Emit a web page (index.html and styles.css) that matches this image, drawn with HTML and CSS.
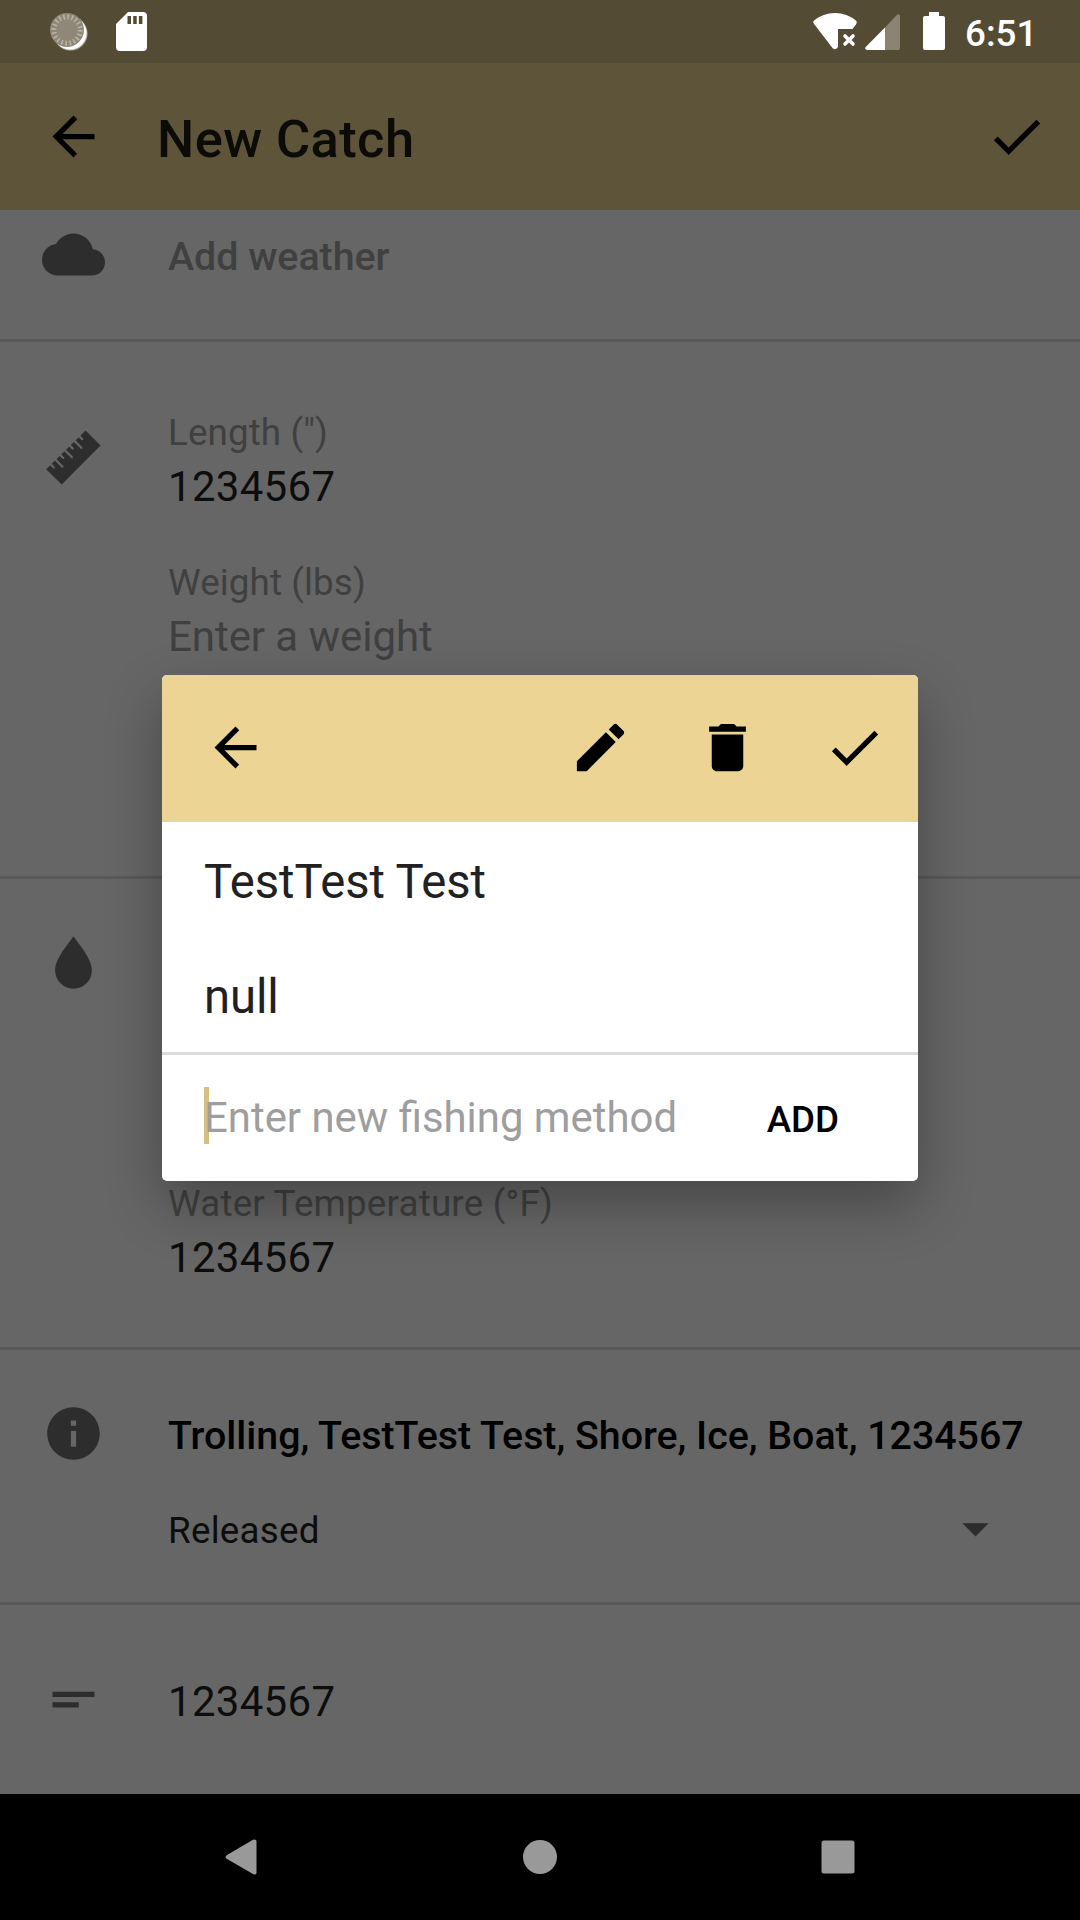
FILE: index.html
```html
<!DOCTYPE html>
<html lang="en">
<head>
<meta charset="utf-8">
<title>New Catch</title>
<link rel="stylesheet" href="styles.css">
</head>
<body>
<div class="screen">
  <header class="status-bar">
    <div class="status-left">
      <svg class="sync" viewBox="0 0 40 40"><circle cx="21.500" cy="21.500" r="17" fill="#b9b4a8"/><circle cx="21" cy="21" r="16.500" fill="#fff"/><circle cx="18" cy="18" r="17" fill="#8f8878"/><circle cx="18" cy="18" r="13.200" fill="none" stroke="#bab5a8" stroke-width="5" stroke-dasharray="1.500 2.647"/></svg>
      <svg class="sd" viewBox="0 0 31 39"><path fill="#fff" fill-rule="evenodd" d="M12 0H27Q31 0 31 4V35Q31 39 27 39H4Q0 39 0 35V12ZM11.500 4V12H15V4ZM17.200 4V12H20.700V4ZM22.900 4V12H26.400V4Z"/></svg>
    </div>
    <div class="status-right">
      <svg class="wifi" viewBox="0 0 44 37"><path fill="#fff" d="M0.500 8Q10 0 22 0T43.500 8Q44 10 43 11.500L39.500 16H25V34Q22 38 19.500 35L.7 10.500Q0 9 .5 8Z"/><path d="M32 23l8 8M40 23l-8 8" stroke="#fff" stroke-width="3.600" stroke-linecap="round"/></svg>
      <svg class="signal" viewBox="0 0 35 36"><path fill="#8b8473" d="M20 13.500L32 .8Q35-.5 35 2V34Q35 36 33 36H20Z"/><path fill="#fff" d="M20 13.500V36H2Q-1 35 .7 33Z"/></svg>
      <svg class="battery" viewBox="0 0 22 38"><path fill="#fff" d="M6 0H16V4H20Q22 4 22 6V36Q22 38 20 38H2Q0 38 0 36V6Q0 4 2 4H6Z"/></svg>
      <span class="clock">6:51</span>
    </div>
  </header>
  <nav class="app-bar">
    <svg class="icon" viewBox="0 0 24 24"><path d="M20 11H7.830l5.590-5.590L12 4l-8 8 8 8 1.410-1.410L7.830 13H20z"/></svg>
    <h1 class="title">New Catch</h1>
    <svg class="icon" viewBox="0 0 24 24"><path d="M9 16.170L4.830 12l-1.420 1.410L9 19 21 7l-1.410-1.410z"/></svg>
  </nav>
  <main class="form">
    <section class="section weather">
      <svg class="icon" viewBox="0 0 24 24"><path d="M19.350 10.040C18.670 6.590 15.640 4 12 4 9.110 4 6.600 5.640 5.350 8.040 2.340 8.360 0 10.910 0 14c0 3.310 2.690 6 6 6h13c2.760 0 5-2.240 5-5 0-2.640-2.050-4.780-4.650-4.960z"/></svg>
      <div class="strong hint">Add weather</div>
    </section>
    <section class="section size">
      <svg class="icon ruler" viewBox="0 0 24 24">
        <path d="M16.600 1.700L22.300 7.400 7.500 22.300 1.600 16.500Z"/>
        <path class="ticks" d="M3 14.300l1.500 1.500M4.800 12.500l3 3M6.600 10.700l1.500 1.500M8.400 8.900l3 3M10.200 7.100l1.500 1.500M12 5.300l3 3M13.800 3.500l1.500 1.500"/>
      </svg>
      <div class="fields">
        <div class="field"><div class="label">Length (")</div><div class="value number">1234567</div></div>
        <div class="field"><div class="label">Weight (lbs)</div><div class="value hint">Enter a weight</div></div>
      </div>
    </section>
    <section class="section water">
      <svg class="icon" viewBox="0 0 24 24"><path d="M12 2C10 5 5 10.500 5 15a7 7 0 0 0 14 0c0-4.500-5-10-7-13z"/></svg>
      <div class="field"><div class="label wide">Water Temperature (°F)</div><div class="value number">1234567</div></div>
    </section>
    <section class="section details">
      <svg class="icon" viewBox="0 0 24 24"><path d="M12 2C6.480 2 2 6.480 2 12s4.480 10 10 10 10-4.480 10-10S17.520 2 12 2zm1 15h-2v-6h2v6zm0-8h-2V7h2v2z"/></svg>
      <div class="detail-rows">
        <div class="strong">Trolling, TestTest Test, Shore, Ice, Boat, 1234567</div>
        <div class="select"><span class="choice">Released</span><svg class="icon" viewBox="0 0 24 24"><path d="M7 10l5 5 5-5z"/></svg></div>
      </div>
    </section>
    <section class="section notes">
      <svg class="icon" viewBox="0 0 24 24"><path d="M4 9h16v2H4zm0 4h10v2H4z"/></svg>
      <div class="value number">1234567</div>
    </section>
  </main>
  <footer class="nav-bar">
    <svg viewBox="0 0 32 36"><path d="M2 16L28 .8Q31-.3 31.500 2V34Q31 36.500 28 35L2 20Q-1 18 2 16Z"/></svg>
    <svg viewBox="0 0 36 36"><circle cx="18" cy="18" r="18"/></svg>
    <svg viewBox="0 0 34 34"><rect x=".5" y=".5" width="33" height="33" rx="2.500"/></svg>
  </footer>

  <div class="dialog">
    <div class="dialog-bar">
      <svg class="icon back" viewBox="0 0 24 24"><path d="M20 11H7.830l5.590-5.590L12 4l-8 8 8 8 1.410-1.410L7.830 13H20z"/></svg>
      <svg class="icon" viewBox="0 0 24 24"><path d="M3 17.250V21h3.750L17.810 9.940l-3.750-3.750L3 17.250zM20.710 7.040c.39-.39.39-1.020 0-1.410l-2.340-2.340c-.39-.39-1.020-.39-1.410 0l-1.830 1.830 3.750 3.750 1.830-1.830z"/></svg>
      <svg class="icon" viewBox="0 0 24 24"><path d="M6 19c0 1.100.9 2 2 2h8c1.100 0 2-.9 2-2V7H6v12zM19 4h-3.500l-1-1h-5l-1 1H5v2h14V4z"/></svg>
      <svg class="icon" viewBox="0 0 24 24"><path d="M9 16.170L4.830 12l-1.420 1.410L9 19 21 7l-1.410-1.410z"/></svg>
    </div>
    <div class="option">TestTest Test</div>
    <div class="option">null</div>
    <div class="add-row"><span class="entry">Enter new fishing method</span><span class="add">ADD</span></div>
  </div>
</div>
</body>
</html>
```
FILE: styles.css
```css
* { box-sizing: border-box; margin: 0; padding: 0; }
body { font-family: Roboto, sans-serif; background: #666; overflow: hidden; }
.screen { position: relative; width: 1080px; height: 1920px; display: flex; flex-direction: column; }
svg { display: block; flex: none; }
.icon { width: 63px; height: 63px; }

.status-bar { height: 65px; height: 63px; padding: 0 48px 0 49px; background: #544b34; display: flex; justify-content: space-between; }
.status-left, .status-right { display: flex; align-items: flex-start; }
.sync { width: 40px; height: 40px; margin-top: 12px; }
.sd { width: 31px; height: 39px; margin: 12px 0 0 27px; }
.wifi { width: 44px; height: 37px; margin-top: 13px; }
.signal { width: 35px; height: 36px; margin: 14px 0 0 8px; }
.battery { width: 22px; height: 38px; margin: 12px 0 0 23px; }
.clock { width: 67px; margin-left: 20px; color: #fff; font-size: 36.750px; font-weight: 500; line-height: 68px; white-space: nowrap; }

.app-bar { height: 147px; padding: 0 32px 0 42px; background: #5e5439; display: flex; align-items: center; }
.title { flex: 1; margin-left: 52px; color: #0c0b07; font-size: 52.500px; font-weight: 500; line-height: 62px; padding-top: 5px; letter-spacing: .38px; }

.form { height: 1584px; color: #0d0d0d; }
.section { display: flex; align-items: flex-start; gap: 63px; padding-left: 42px; border-bottom: 3px solid #595959; }
.section > .icon { fill: #2d2d2d; }
.ruler .ticks { stroke: #666; stroke-width: .85; stroke-linecap: round; }
.label { color: #404040; font-size: 36.750px; line-height: 52px; letter-spacing: .12px; }
.label.wide { letter-spacing: .2px; }
.value { font-size: 42px; line-height: 56px; letter-spacing: -.06px; }
.number { letter-spacing: .3px; }
.strong { font-size: 39.375px; font-weight: 500; line-height: 50px; color: #000; white-space: nowrap; letter-spacing: -.025px; }
.hint { color: #404040; }

.weather { height: 132px; padding-top: 13px; }
.weather .strong { margin-top: 9px; }
.size { height: 537px; padding-top: 64.500px; }
.size .icon { margin-top: 19px; }
.fields { display: flex; flex-direction: column; gap: 42px; }
.water { height: 471px; padding-top: 52px; }
.water .field { margin-top: 246.500px; }
.details { height: 255px; padding-top: 52px; }
.detail-rows { flex: 1; padding-top: 9px; }
.select { display: flex; align-items: center; justify-content: space-between; height: 63px; margin-top: 36px; padding-right: 73px; font-size: 36.750px; }
.choice { padding-top: 3px; letter-spacing: .25px; }
.select .icon { fill: #2d2d2d; }
.notes { height: 189px; padding-top: 62.500px; border-bottom: 0; }
.notes .value { margin-top: 6px; }

.nav-bar { height: 126px; padding: 0 225px 0 224px; background: #000; display: flex; align-items: center; justify-content: space-between; }
.nav-bar svg { width: 34px; height: 36px; fill: #999; }

.dialog { position: absolute; left: 162px; top: 675px; width: 756px; height: 506px; border-radius: 5px; overflow: hidden; background: #fff; box-shadow: 0 24px 56px rgba(0, 0, 0, .3); }
.dialog-bar { height: 147px; padding: 0 32px 2px 42px; background: #ebd494; display: flex; align-items: center; gap: 64px; }
.dialog-bar .back { margin-right: auto; }
.option { height: 115px; padding: 2px 42px 0; color: #212121; font-size: 47.250px; line-height: 116px; letter-spacing: -.1px; }
.add-row { height: 129px; border-top: 3px solid #dcdcdc; display: flex; align-items: flex-start; padding: 32px 79px 0 42px; }
.entry { flex: 1; height: 57px; border-left: 5px solid #d5bf81; color: #9e9e9e; font-size: 41.900px; line-height: 62px; text-indent: -5px; white-space: nowrap; }
.add { margin-top: 5px; color: #000; font-size: 36.750px; font-weight: 500; line-height: 56px; }
```
